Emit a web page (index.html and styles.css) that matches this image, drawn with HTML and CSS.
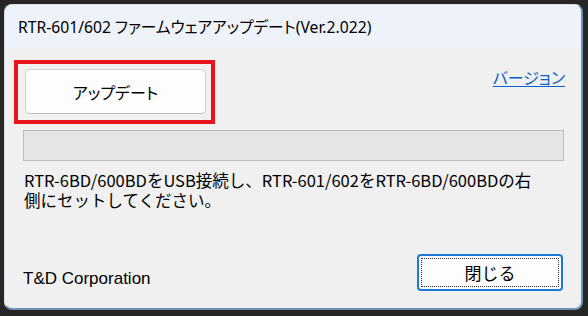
FILE: index.html
```html
<!DOCTYPE html>
<html lang="ja">
<head>
<meta charset="utf-8">
<title>RTR-601/602 ファームウェアアップデート</title>
<link rel="stylesheet" href="styles.css">
</head>
<body>
<div class="window">
  <div class="titlebar">RTR-601/602 ファームウェアアップデート(Ver.2.022)</div>
  <div class="content">
    <div class="toprow">
      <div class="btn-wrap">
        <button class="btn btn-update">アップデート</button>
        <span class="highlight"></span>
      </div>
      <a class="link" href="#">バージョン</a>
    </div>
    <div class="progress"></div>
    <p class="message">RTR-6BD/600BDをUSB接続し、RTR-601/602をRTR-6BD/600BDの右<br>側にセットしてください。</p>
    <div class="footer">
      <span class="company">T&amp;D Corporation</span>
      <button class="btn btn-close"><span class="focus">閉じる</span></button>
    </div>
  </div>
</div>
</body>
</html>
```
FILE: styles.css
```css
html, body {
  margin: 0;
  padding: 0;
}
body {
  background: #262626;
  width: 588px;
  height: 316px;
  box-sizing: border-box;
  padding: 4px 5px 6px 4px;
  font-family: "Noto Sans", "Noto Sans CJK JP", sans-serif;
  color: #000;
}
.window {
  box-sizing: border-box;
  width: 579px;
  height: 306px;
  border-radius: 8px;
  border: 1px solid #d9dde3;
  border-right: 2px solid #6c90b6;
  border-bottom: 2px solid #6c90b6;
  background: #f0f0f0;
  overflow: hidden;
  display: flex;
  flex-direction: column;
}
.titlebar {
  height: 43px;
  flex: none;
  background: #eef2f9;
  display: flex;
  align-items: center;
  padding-left: 13px;
  font-size: 15.7px;
  font-feature-settings: "palt";
}
.content {
  flex: 1;
  display: flex;
  flex-direction: column;
  padding: 21px 17px 15px 18px;
}
.toprow {
  display: flex;
  justify-content: space-between;
  align-items: flex-start;
}
.btn-wrap {
  position: relative;
  margin-left: 2px;
}
.btn {
  font-family: "Noto Sans CJK JP", sans-serif;
  color: #000;
  margin: 0;
  padding: 0;
  cursor: default;
}
.btn-update {
  width: 181px;
  height: 45px;
  background: #fdfdfd;
  border: 1px solid #d2d2d2;
  border-bottom-color: #bdbdbd;
  border-radius: 5px;
  font-size: 16px;
  font-feature-settings: "palt";
}
.highlight {
  position: absolute;
  left: -11px;
  top: -9px;
  right: -9px;
  bottom: -10px;
  border: 4px solid #e8141c;
  pointer-events: none;
}
.link {
  margin-top: -4px;
  font-family: "Noto Sans CJK JP", sans-serif;
  font-size: 16px;
  font-feature-settings: "palt";
  color: #0a5fc8;
  text-decoration: underline;
  text-underline-offset: 2px;
  margin-right: -1px;
}
.progress {
  margin-top: 16px;
  height: 29px;
  border: 1px solid #bcbcbc;
  background: #e6e6e6;
}
.message {
  margin: 9px 0 0 1px;
  font-family: "Noto Sans CJK JP", sans-serif;
  font-size: 16.5px;
  line-height: 20px;
  white-space: nowrap;
}
.footer {
  margin-top: auto;
  display: flex;
  justify-content: space-between;
  align-items: center;
}
.company {
  font-family: "Liberation Sans", sans-serif;
  font-size: 17px;
  margin-top: 10px;
}
.btn-close {
  width: 146px;
  height: 37px;
  background: #fdfdfd;
  border: 2px solid #1a78d6;
  border-radius: 4px;
  padding: 2px;
  margin-right: 1px;
  margin-bottom: 2px;
  font-size: 17px;
}
.focus {
  display: flex;
  align-items: center;
  justify-content: center;
  height: 100%;
  box-sizing: border-box;
  border: 1px dotted #333;
}
```
